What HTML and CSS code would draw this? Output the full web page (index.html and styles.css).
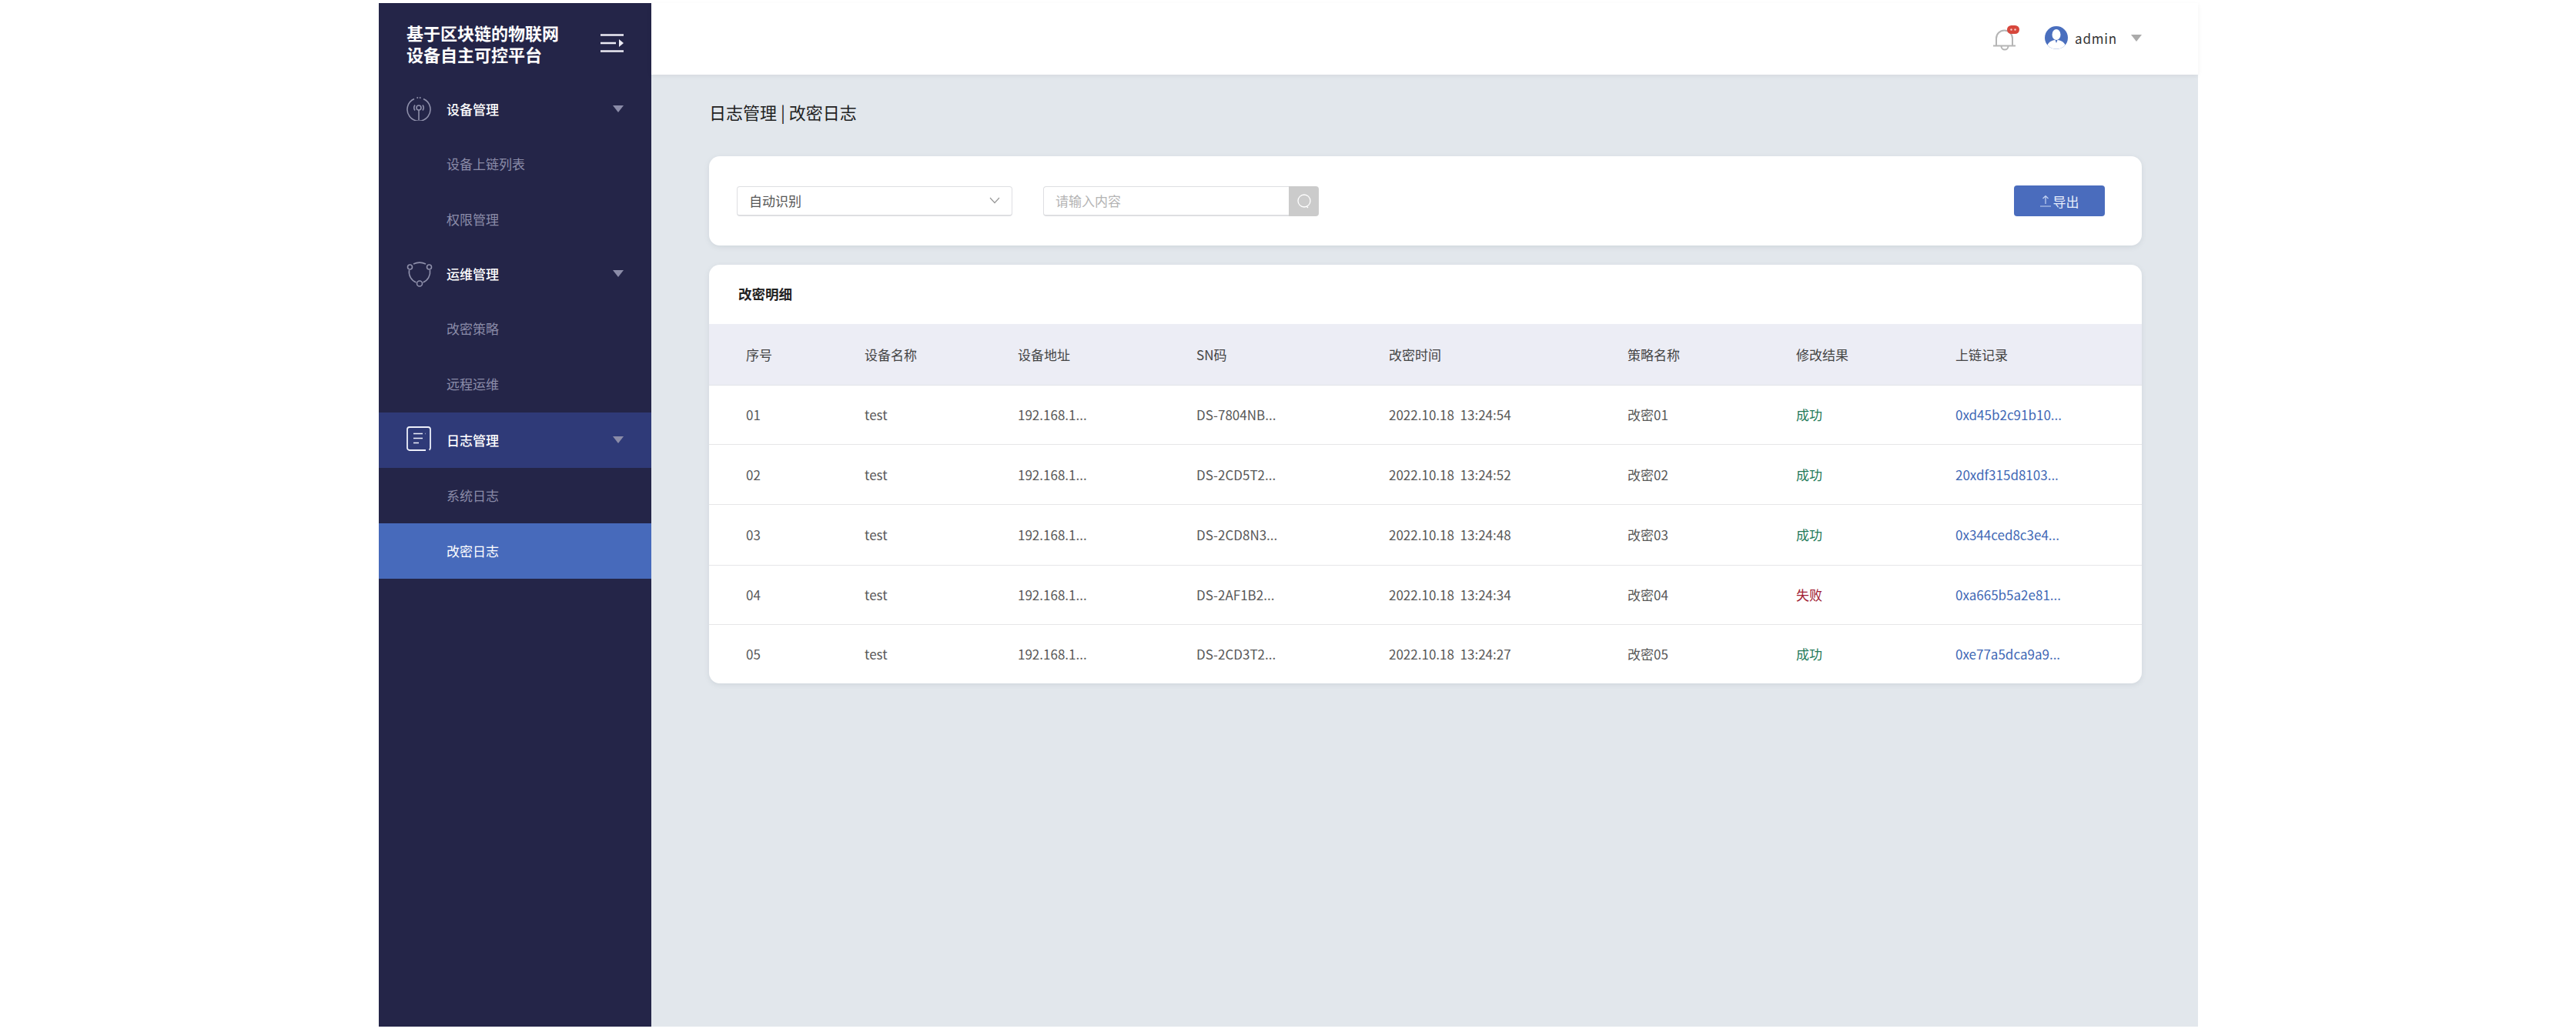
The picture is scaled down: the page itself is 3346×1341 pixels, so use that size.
FILE: index.html
```html
<!DOCTYPE html>
<html lang="zh-CN">
<head>
    <meta charset="UTF-8">
    <title>改密日志</title>
    <link rel="stylesheet" href="styles.css">
</head>
<body>
    <div class="app">
        <aside class="sidebar">
            <div class="brand">
                <div class="brand-name">基于区块链的物联网<br>设备自主可控平台</div>
                <svg class="fold-icon" width="30" height="24" viewBox="0 0 30 24">
                    <path d="M0 1.500h30M0 12h20M0 22.500h30" stroke="#ecebf4" stroke-width="2.400" fill="none"/>
                    <path d="M24 7l6 5-6 5z" fill="#ecebf4"/>
                </svg>
            </div>
            <div class="menu-item">
                <svg class="menu-icon" width="32" height="32" viewBox="0 0 32 32" fill="none" stroke="#8f90ab" stroke-width="1.600">
                    <path d="M10 3.500a15 15 0 1 0 12 0"/>
                    <path d="M13.500 1.500l1.500 1M18.500 1.500l-1.500 1"/>
                    <circle cx="16" cy="15" r="3"/>
                    <path d="M16 18v13"/>
                    <path d="M11 11.500a6 6 0 0 0 0 7M21 11.500a6 6 0 0 1 0 7"/>
                </svg>
                <span>设备管理</span>
                <i class="caret"></i>
            </div>
            <div class="sub-item">设备上链列表</div>
            <div class="sub-item">权限管理</div>
            <div class="menu-item">
                <svg class="menu-icon" width="34" height="34" viewBox="0 0 34 34" fill="none" stroke="#8f90ab" stroke-width="1.600">
                    <circle cx="4.500" cy="8" r="3"/>
                    <circle cx="29.500" cy="8" r="3"/>
                    <circle cx="17" cy="29.500" r="3.500"/>
                    <path d="M9 4a19 19 0 0 1 16 0"/>
                    <path d="M3.500 12a15 15 0 0 0 9 16M30.500 12a15 15 0 0 1-9 16"/>
                </svg>
                <span>运维管理</span>
                <i class="caret"></i>
            </div>
            <div class="sub-item">改密策略</div>
            <div class="sub-item">远程运维</div>
            <div class="menu-item active">
                <svg class="menu-icon" width="32" height="32" viewBox="0 0 32 32" fill="none" stroke="#eef0fa" stroke-width="1.800">
                    <path d="M25 31H4a3 3 0 0 1-3-3V4a3 3 0 0 1 3-3h24a3 3 0 0 1 3 3v24a3 3 0 0 1-1.500 2.600"/>
                    <path d="M9 9.500h12M24 9.500h.5M9 15.500h12M9 21.500h7" stroke-width="1.300"/>
                </svg>
                <span>日志管理</span>
                <i class="caret"></i>
            </div>
            <div class="sub-item log-item">系统日志</div>
            <div class="sub-item log-item current">改密日志</div>
        </aside>

        <div class="main">
            <header class="topbar">
                <div class="bell">
                    <svg width="30" height="30" viewBox="0 0 30 30" fill="none" stroke="#b5b5b5" stroke-width="2">
                        <path d="M0 23.500h29M4 23.500V14a10.500 10.500 0 0 1 21 0v9.500"/>
                        <path d="M10.500 24a4.500 4.500 0 0 0 9 0"/>
                    </svg>
                    <svg class="bell-badge" width="16" height="11" viewBox="0 0 16 11">
                        <rect width="16" height="11" rx="5.500" fill="#d7473c"/>
                        <circle cx="5.500" cy="5.500" r="1.200" fill="#f6cfcb"/>
                        <circle cx="10.500" cy="5.500" r="1.200" fill="#f6cfcb"/>
                    </svg>
                </div>
                <svg class="avatar" width="30" height="30" viewBox="0 0 30 30">
                    <circle cx="15" cy="15" r="15" fill="#4a6fbe"/>
                    <ellipse cx="15" cy="11" rx="5.500" ry="7" fill="#fff"/>
                    <path d="M3.500 24.500c2-5 7-6.500 11.500-6.500s9.500 1.500 11.500 6.500a15 15 0 0 1-23 0z" fill="#fff"/>
                    <path d="M13.500 18h3l-1.500 4z" fill="#4a6fbe"/>
                </svg>
                <span class="user-name">admin</span>
                <i class="caret caret-gray"></i>
            </header>

            <main class="content">
                <h1 class="crumb">日志管理 | 改密日志</h1>

                <section class="card filter-card">
                    <div class="select-box">
                        <span>自动识别</span>
                        <svg width="14" height="9" viewBox="0 0 14 9" fill="none" stroke="#999" stroke-width="1.200"><path d="M1 1l6 6.500L13 1"/></svg>
                    </div>
                    <div class="search-box">
                        <span class="search-input">请输入内容</span>
                        <span class="search-btn">
                            <svg width="20" height="20" viewBox="0 0 20 20" fill="none" stroke="#fff" stroke-width="1.300"><circle cx="10" cy="10" r="8"/><path d="M13 17l2 2"/></svg>
                        </span>
                    </div>
                    <button class="export-btn">
                        <svg width="14" height="16" viewBox="0 0 14 16" fill="none" stroke="#c4d3f2" stroke-width="1.200"><path d="M0 15h14M7 12V2M3.500 5L7 1.500 10.500 5"/></svg>
                        导出
                    </button>
                </section>

                <section class="card table-card">
                    <h2 class="card-title">改密明细</h2>
                    <table class="log-table">
                        <thead>
                            <tr>
                                <th>序号</th>
                                <th>设备名称</th>
                                <th>设备地址</th>
                                <th>SN码</th>
                                <th>改密时间</th>
                                <th>策略名称</th>
                                <th>修改结果</th>
                                <th>上链记录</th>
                            </tr>
                        </thead>
                        <tbody>
                            <tr>
                                <td>01</td>
                                <td>test</td>
                                <td>192.168.1...</td>
                                <td>DS-7804NB...</td>
                                <td>2022.10.18&nbsp;&nbsp;13:24:54</td>
                                <td>改密01</td>
                                <td class="ok">成功</td>
                                <td class="hash">0xd45b2c91b10...</td>
                            </tr>
                            <tr>
                                <td>02</td>
                                <td>test</td>
                                <td>192.168.1...</td>
                                <td>DS-2CD5T2...</td>
                                <td>2022.10.18&nbsp;&nbsp;13:24:52</td>
                                <td>改密02</td>
                                <td class="ok">成功</td>
                                <td class="hash">20xdf315d8103...</td>
                            </tr>
                            <tr>
                                <td>03</td>
                                <td>test</td>
                                <td>192.168.1...</td>
                                <td>DS-2CD8N3...</td>
                                <td>2022.10.18&nbsp;&nbsp;13:24:48</td>
                                <td>改密03</td>
                                <td class="ok">成功</td>
                                <td class="hash">0x344ced8c3e4...</td>
                            </tr>
                            <tr>
                                <td>04</td>
                                <td>test</td>
                                <td>192.168.1...</td>
                                <td>DS-2AF1B2...</td>
                                <td>2022.10.18&nbsp;&nbsp;13:24:34</td>
                                <td>改密04</td>
                                <td class="fail">失败</td>
                                <td class="hash">0xa665b5a2e81...</td>
                            </tr>
                            <tr>
                                <td>05</td>
                                <td>test</td>
                                <td>192.168.1...</td>
                                <td>DS-2CD3T2...</td>
                                <td>2022.10.18&nbsp;&nbsp;13:24:27</td>
                                <td>改密05</td>
                                <td class="ok">成功</td>
                                <td class="hash">0xe77a5dca9a9...</td>
                            </tr>
                        </tbody>
                    </table>
                </section>
            </main>
        </div>
    </div>
</body>
</html>
```

FILE: styles.css
```css
* {
    margin: 0;
    padding: 0;
    box-sizing: border-box;
}

body {
    font-family: "Noto Sans CJK SC", "Noto Sans", sans-serif;
    background: #fff;
    height: 1341px;
    overflow: hidden;
}

.app {
    display: flex;
    width: 2363px;
    height: 1330px;
    margin: 4px 0 0 492px;
}

/* sidebar */
.sidebar {
    width: 354px;
    flex-shrink: 0;
    background: #242548;
    color: #8b8ca8;
}

.brand {
    height: 103px;
    padding: 24px 36px 0;
    display: flex;
    justify-content: space-between;
    align-items: flex-start;
}

.brand-name {
    color: #fff;
    font-size: 22px;
    line-height: 28px;
    font-weight: 700;
}

.fold-icon {
    margin-top: 16px;
}

.menu-item, .sub-item {
    height: 71.300px;
    padding-bottom: 2px;
    display: flex;
    align-items: center;
    font-size: 17px;
}

.menu-item {
    padding-left: 36px;
    padding-right: 36px;
    color: #fff;
    font-weight: 500;
    position: relative;
}

.menu-item span {
    margin-left: 52px;
    flex: 1;
}

.menu-icon {
    position: absolute;
    left: 36px;
    top: 18px;
}

.menu-item.active {
    background: #2f3a78;
    height: 72px;
    margin-top: 1px;
    padding-bottom: 0;
}

.sub-item {
    padding-left: 88px;
}

.sub-item.log-item {
    height: 72px;
    padding-bottom: 0;
}

.sub-item.current {
    background: #476abb;
    color: #fff;
}

.caret {
    width: 0;
    height: 0;
    border-left: 7.500px solid transparent;
    border-right: 7.500px solid transparent;
    border-top: 9px solid #8b8ca8;
}

.caret-gray {
    border-top-color: #ababab;
    margin-left: 18px;
}

/* main area */
.main {
    flex: 1;
    min-width: 0;
    display: flex;
    flex-direction: column;
}

.topbar {
    height: 93px;
    background: #fff;
    display: flex;
    align-items: center;
    justify-content: flex-end;
    padding: 0 73px 3px 0;
    box-shadow: 0 2px 6px rgba(0,0,0,0.06);
    position: relative;
}

.bell {
    position: relative;
    width: 30px;
    height: 30px;
    margin-right: 37px;
    margin-top: 3px;
}

.bell-badge {
    position: absolute;
    left: 18px;
    top: -3px;
}

.user-name {
    margin-left: 9px;
    font-size: 17px;
    letter-spacing: 0.800px;
    color: #333;
}

.content {
    flex: 1;
    background: #e2e7ec;
    padding: 32px 73px 0 75px;
}

.crumb {
    font-size: 22px;
    font-weight: 400;
    line-height: 32px;
    color: #222;
    margin-bottom: 42px;
}

.card {
    background: #fff;
    border-radius: 14px;
    box-shadow: 0 2px 6px rgba(120,130,145,0.16);
}

.filter-card {
    height: 116px;
    padding: 0 48px 0 36px;
    display: flex;
    align-items: center;
    margin-bottom: 25px;
    font-size: 17px;
}

.select-box {
    width: 358px;
    height: 39px;
    border: 1px solid #dedfe2;
    border-bottom-width: 2px;
    border-radius: 4px;
    padding: 0 15px;
    display: flex;
    align-items: center;
    justify-content: space-between;
    color: #555;
}

.search-box {
    display: flex;
    width: 358px;
    height: 39px;
    margin-left: 40px;
}

.search-input {
    flex: 1;
    border: 1px solid #dedfe2;
    border-bottom-width: 2px;
    border-right: none;
    border-radius: 4px 0 0 4px;
    padding: 0 15px;
    display: flex;
    align-items: center;
    color: #b4b4b4;
}

.search-btn {
    width: 39px;
    background: #cbcbcb;
    border-radius: 0 4px 4px 0;
    display: flex;
    align-items: center;
    justify-content: center;
}

.export-btn {
    margin-left: auto;
    width: 118px;
    height: 40px;
    border: none;
    border-radius: 4px;
    background: #4a6cbd;
    color: #e8eefb;
    font-family: inherit;
    font-size: 17px;
    display: flex;
    align-items: center;
    justify-content: center;
    gap: 3px;
}

.table-card {
    overflow: hidden;
    height: 544px;
}

.card-title {
    height: 77px;
    line-height: 76px;
    padding-left: 38px;
    font-size: 17.500px;
    font-weight: 700;
    color: #222;
}

.log-table {
    width: 100%;
    border-collapse: collapse;
    table-layout: fixed;
    font-size: 17px;
    color: #585858;
    text-align: left;
}

.log-table th {
    height: 79px;
    background: #ecedf5;
    border-bottom: 1px solid #e2e3e8;
    font-weight: 400;
    color: #444;
}

.log-table td {
    height: 77px;
    border-bottom: 1px solid #e6e6e8;
    white-space: nowrap;
}

.log-table tr:nth-child(2) td { height: 78px; }
.log-table tr:nth-child(3) td { height: 79px; }

.log-table tr:last-child td {
    border-bottom: none;
}

.log-table th:nth-child(1), .log-table td:nth-child(1) { width: 202px; padding-left: 48px; }
.log-table th:nth-child(2) { width: 199px; }
.log-table th:nth-child(3) { width: 232px; }
.log-table th:nth-child(4) { width: 250px; }
.log-table th:nth-child(5) { width: 310px; }
.log-table th:nth-child(6) { width: 219px; }
.log-table th:nth-child(7) { width: 207px; }

.log-table .ok { color: #1f7a58; }
.log-table .fail { color: #a01c34; }
.log-table .hash { color: #3f68b5; }
```
